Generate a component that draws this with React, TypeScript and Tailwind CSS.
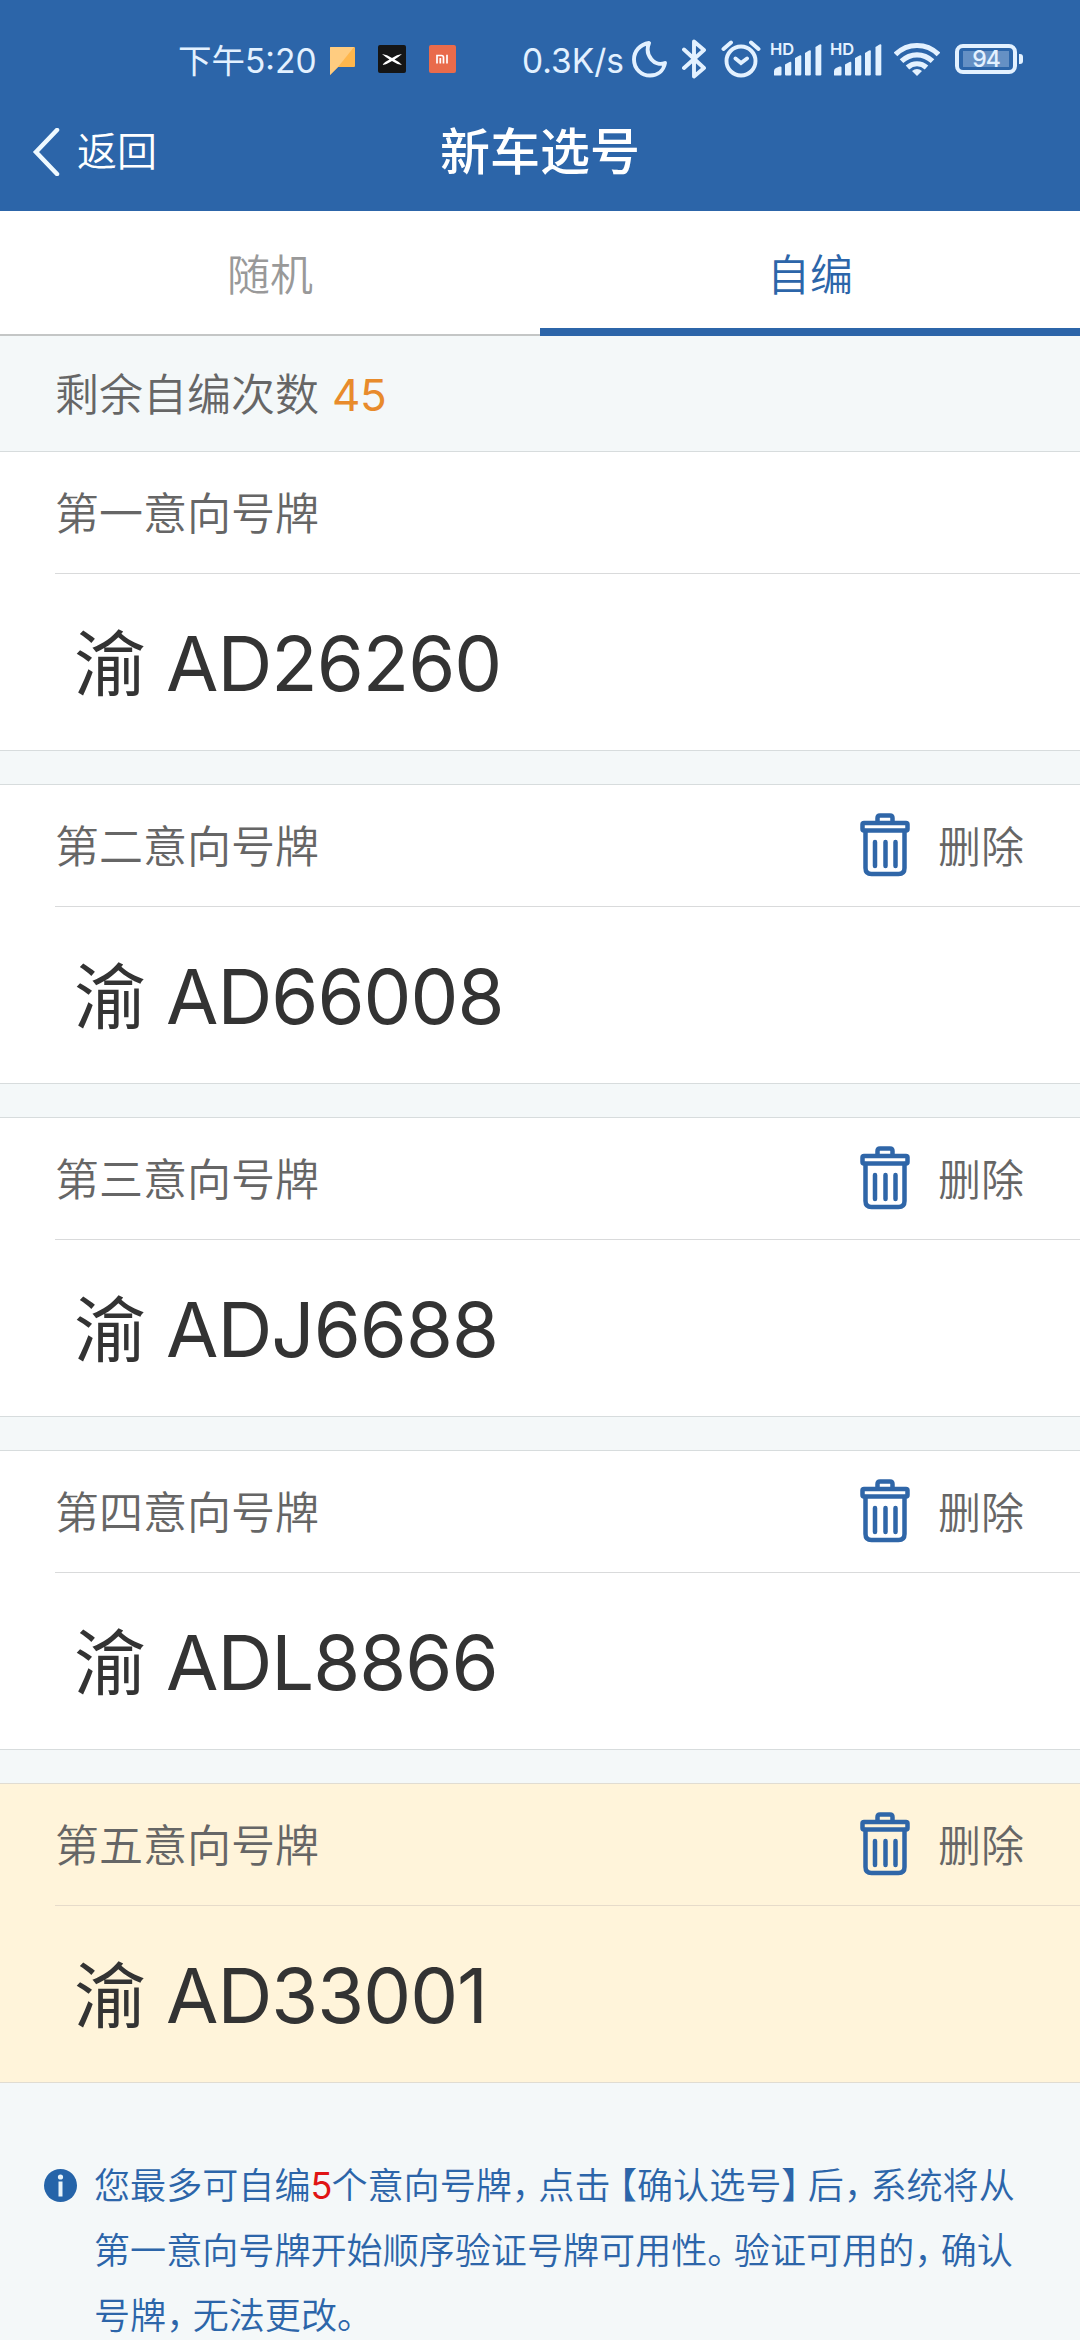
import type { ReactNode } from "react"

interface Plate {
  title: string
  number: string
  removable: boolean
  active?: boolean
}

const plates: Plate[] = [
  { title: "第一意向号牌", number: "AD26260", removable: false },
  { title: "第二意向号牌", number: "AD66008", removable: true },
  { title: "第三意向号牌", number: "ADJ6688", removable: true },
  { title: "第四意向号牌", number: "ADL8866", removable: true },
  { title: "第五意向号牌", number: "AD33001", removable: true, active: true },
]

const SignalIcon = ({ className }: { className: string }) => (
  <div className={`relative ${className}`}>
    <span className="absolute left-[-1px] top-[-3px] text-[16.500px] font-semibold leading-[20px]">HD</span>
    <svg width="52" height="34" viewBox="0 0 52 34" fill="#e3f1ff">
      <path d="M3 33v-4q0-2 2-3l3.500-1.500q2-.5 2 1v7q0 1-1 1h-5.500q-1 0-1-.5z" />
      <path d="M14 22.500l4.500-2.500q1.800-1 1.800.8v11.500q0 1.200-1.200 1.200h-4q-1.100 0-1.100-1.200z" />
      <path d="M24 16l4.500-2.500q1.800-1 1.800.8v18q0 1.200-1.200 1.200h-4q-1.100 0-1.100-1.200z" />
      <path d="M34 11l4-2.500q1.800-1 1.800.8v23q0 1.200-1.200 1.200h-3.500q-1.100 0-1.100-1.200z" />
      <path d="M44.500 5l4-2.500q1.800-1 1.800.8v29q0 1.200-1.200 1.200h-3.500q-1.100 0-1.100-1.200z" />
    </svg>
  </div>
)

const StatusBar = () => {
  return (
    <div className="flex h-[100px] items-start text-[33.500px] leading-[40px] text-[#e3f1ff]">
      <span className="ml-[178px] mt-[41px] w-[152px] whitespace-nowrap">下午5:20</span>
      <svg className="mt-[46px]" width="25" height="29" viewBox="0 0 25 29">
        <path d="M1 1h23q1 0 1 1v18q0 1-1 1H8l-8 8V2q0-1 1-1z" fill="#ffb74d" />
        <path d="M1 1h23L8 21l-8 8V2q0-1 1-1z" fill="#ffcc80" />
      </svg>
      <svg className="ml-[23px] mt-[45px]" width="28" height="28" viewBox="0 0 28 28">
        <rect width="28" height="28" rx="2" fill="#151515" />
        <path d="M4 9q5 .5 10 4 5-3.500 10-4-4 3.500-7.500 5.500 3.500 1.500 7.500 5.500-5-.5-10-4-5 3.500-10 4 4-4 7.500-5.500Q8 12.500 4 9z" fill="#fff" />
      </svg>
      <svg className="ml-[23px] mt-[45px]" width="27" height="28" viewBox="0 0 27 28">
        <rect width="27" height="28" rx="2" fill="#e96b4b" />
        <path d="M8 18.500v-8h4.500q2 0 2 2v6M11.300 13v5.500M18 9.800v8.700" fill="none" stroke="#fff" strokeWidth="1.700" />
      </svg>
      <span className="ml-[66px] mt-[41px] w-[110px] whitespace-nowrap">0.3K/s</span>
      <svg className="mt-[41px]" width="35" height="37" viewBox="0 0 35 37" fill="none" stroke="#e3f1ff" strokeWidth="3.900" strokeLinejoin="round">
        <path d="M17 2C8 3.500 2 10 2 18.500 2 28 9.500 34.500 18 34.500c7.500 0 13.500-4.500 15-12.500C23 26 12 15 17 2z" />
      </svg>
      <svg className="ml-[15px] mt-[39px]" width="25" height="40" viewBox="0 0 25 40" fill="none" stroke="#e3f1ff" strokeWidth="3.900" strokeLinejoin="round" strokeLinecap="round">
        <path d="M2 10.500l20 18.500-10 8.500V2.500L22 11 2 29" />
      </svg>
      <svg className="ml-[14px] mt-[40px]" width="40" height="38" viewBox="0 0 40 38" fill="none" stroke="#e3f1ff" strokeWidth="3.900" strokeLinecap="round">
        <circle cx="20" cy="21" r="14.500" />
        <path d="M14.500 18.500l5.500 4.500 6-4.500M2.500 9L10 2.500M37.500 9L30 2.500" />
      </svg>
      <SignalIcon className="ml-[10px] mt-[42px]" />
      <SignalIcon className="ml-[8px] mt-[42px]" />
      <svg className="ml-[11px] mt-[42px]" width="46" height="35" viewBox="0 0 46 35" fill="none" stroke="#e3f1ff" strokeWidth="5.200">
        <path d="M1.500 12.500C13.500.5 32.500.5 44.500 12.500" />
        <path d="M7.500 19.200c9-8.500 22-8.500 31 0" />
        <path d="M13.500 25.500c5.500-5 13.500-5 19 0" />
        <path d="M18 29q5-4 10 0l-5 5z" fill="#e3f1ff" stroke="none" />
      </svg>
      <div className="ml-[15px] mt-[44px] flex items-center">
        <div className="flex h-[30px] w-[62px] items-center justify-center rounded-[8px] border-4 border-[#e3f1ff]">
          <div className="flex h-[16px] w-[46px] items-center justify-center bg-[#6590c4] text-[23px] font-medium leading-none tracking-[-1px]">94</div>
        </div>
        <div className="ml-[2px] h-[10px] w-[4px] rounded-r-[3px] bg-[#e3f1ff]" />
      </div>
    </div>
  )
}

const Header = () => {
  return (
    <header className="h-[211px] bg-[#2c65a9] text-white">
      <StatusBar />
      <div className="grid h-[103px] grid-cols-3 items-center">
        <div className="flex items-center pl-[32px] text-[40px]">
          <svg width="28" height="48" viewBox="0 0 28 48" fill="none" stroke="#eef9ff" strokeWidth="4.500">
            <path d="M25 2L4 24l21 22" strokeLinecap="round" />
          </svg>
          <span className="ml-[17px] mt-[1px] font-[350]">返回</span>
        </div>
        <h1 className="mt-[1px] text-center text-[50px] font-medium leading-none">新车选号</h1>
      </div>
    </header>
  )
}

const Tabs = () => {
  return (
    <div className="flex h-[125px] bg-white text-[43px] font-[350]">
      <div className="flex-1 border-b-2 border-[#c4c6c6] text-center leading-[129px] text-[#999]">随机</div>
      <div className="flex-1 border-b-8 border-[#2c65a9] text-center leading-[129px] text-[#2c65a9]">自编</div>
    </div>
  )
}

const TrashIcon = () => (
  <svg className="mb-[2px]" width="50" height="64" viewBox="0 0 50 64" fill="none" stroke="#2f66a8" strokeWidth="4.500" strokeLinecap="round" strokeLinejoin="round">
    <path d="M17.500 9V5q0-2.500 2.500-2.500h10q2.500 0 2.500 2.500v4" />
    <rect x="2.500" y="10" width="45" height="7.500" rx="1.500" />
    <path d="M5.500 18v37q0 6 6 6h27q6 0 6-6V18M15 29v24M25.500 29v24M35.500 29v24" />
  </svg>
)

const PlateCard = ({ title, number, removable, active }: Plate) => {
  return (
    <section className={active ? "border-y border-[#e0dcd2] bg-[#fff4da]" : "border-y border-[#d7dcdd] bg-white"}>
      <div className={`ml-[55px] flex h-[122px] items-center justify-between border-b pr-[56px] text-[44px] font-[350] text-[#666] ${active ? "border-[#e6dbca]" : "border-[#d9dadb]"}`}>
        <h2 className="pt-[2px]">{title}</h2>
        {removable && (
          <div className="flex items-center">
            <TrashIcon />
            <span className="ml-[28px] mt-[3px] text-[43px]">删除</span>
          </div>
        )}
      </div>
      <div className="flex h-[176px] items-center pl-[74px] text-[#333]">
        <span className="pt-[4px] text-[72px] leading-none">渝</span>
        <span className="ml-[20px] pt-[1px] text-[76px] leading-none tracking-[-1px]">{number}</span>
      </div>
    </section>
  )
}

// punctuation is set narrower than a full em
const Mark = ({ children, open }: { children: ReactNode; open?: boolean }) => (
  <span className={`inline-block w-[26.500px] whitespace-nowrap [font-feature-settings:'halt'] ${open ? "text-right" : ""}`}>{children}</span>
)

const Notice = () => {
  return (
    <div className="flex pl-[44px] pt-[71px] text-[36.100px] font-[350] leading-[65px] text-[#2c65a9]">
      <svg className="mt-[15px] shrink-0" width="33" height="33" viewBox="0 0 33 33">
        <circle cx="16.500" cy="16.500" r="16.500" fill="#2564a9" />
        <circle cx="16.500" cy="8" r="2.600" fill="#e8f4fa" />
        <path d="M14.500 12.500h4v15h-4z" fill="#e8f4fa" />
      </svg>
      <div className="ml-[17px] whitespace-nowrap">
        <p>您最多可自编<span className="text-[#e01515] font-normal tracking-[-1px]">5</span>个意向号牌<Mark>，</Mark>点击<Mark open>【</Mark>确认选号<Mark>】</Mark>后<Mark>，</Mark>系统将从</p>
        <p>第一意向号牌开始顺序验证号牌可用性<Mark>。</Mark>验证可用的<Mark>，</Mark>确认</p>
        <p>号牌<Mark>，</Mark>无法更改<Mark>。</Mark></p>
      </div>
    </div>
  )
}

export default function App() {
  return (
    <main className="h-[2340px] w-[1080px] overflow-hidden bg-[#f4f8f9] font-[Inter,'Noto_Sans_CJK_SC',sans-serif]">
      <Header />
      <Tabs />
      <div className="flex h-[115px] items-center pl-[55px] pt-[2px] text-[44px] font-[350] text-[#666]">
        剩余自编次数<span className="ml-[13px] font-normal tracking-[-0.500px] text-[#e88b2c]">45</span>
      </div>
      <div className="flex flex-col gap-[33px]">
        {plates.map((plate) => (
          <PlateCard key={plate.title} {...plate} />
        ))}
      </div>
      <Notice />
    </main>
  )
}
